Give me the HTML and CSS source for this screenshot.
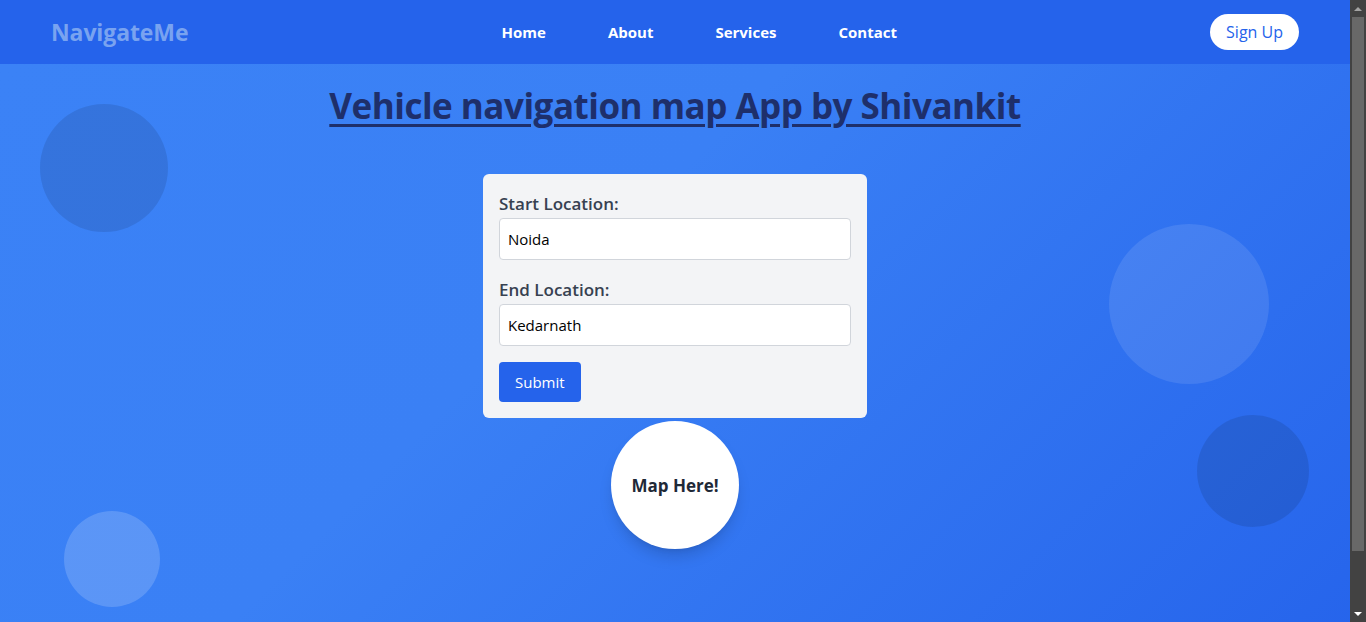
FILE: index.html
```html
<!DOCTYPE html>
<html lang="en">
<head>
<meta charset="utf-8">
<title>NavigateMe</title>
<link rel="stylesheet" href="styles.css">
</head>
<body>
<nav class="navbar">
  <div class="nav-inner">
    <a class="logo" href="#">NavigateMe</a>
    <ul class="nav-links">
      <li><a href="#">Home</a></li>
      <li><a href="#">About</a></li>
      <li><a href="#">Services</a></li>
      <li><a href="#">Contact</a></li>
    </ul>
    <a class="signup" href="#">Sign Up</a>
  </div>
</nav>
<main class="hero">
  <span class="blob blob-1"></span>
  <span class="blob blob-2"></span>
  <span class="blob blob-3"></span>
  <span class="blob blob-4"></span>
  <h1 class="title">Vehicle navigation map App by Shivankit</h1>
  <form class="card">
    <label class="label" for="start">Start Location:</label>
    <input class="input" id="start" type="text" value="Noida">
    <label class="label" for="end">End Location:</label>
    <input class="input" id="end" type="text" value="Kedarnath">
    <button class="submit" type="button">Submit</button>
  </form>
  <div class="map-circle">Map Here!</div>
</main>
<div class="scrollbar" aria-hidden="true">
  <span class="sb-btn"><span class="arrow-up"></span></span>
  <span class="sb-track"><span class="sb-thumb"></span></span>
  <span class="sb-btn"><span class="arrow-down"></span></span>
</div>
</body>
</html>
```

FILE: styles.css
```css
html::-webkit-scrollbar {
  display: none;
}
* {
  box-sizing: border-box;
}
body {
  margin: 0;
  padding-right: 16px;
  font-family: "Open Sans", "Noto Sans", sans-serif;
  color: #111827;
  background: #3b82f6;
}
a {
  text-decoration: none;
}
.navbar {
  background: #2563eb;
  height: 64px;
}
.nav-inner {
  max-width: 1280px;
  margin: 0 auto;
  padding: 0 16px;
  height: 64px;
  display: flex;
  align-items: center;
  justify-content: space-between;
}
.logo {
  font-size: 23px;
  font-weight: 700;
  color: #79a3f0;
  letter-spacing: -0.1px;
}
.nav-links {
  list-style: none;
  margin: 0;
  padding: 0;
  display: flex;
  gap: 62px;
}
.nav-links a {
  color: #ffffff;
  font-weight: 700;
  font-size: 15px;
}
.signup {
  background: #ffffff;
  color: #2563eb;
  font-size: 16px;
  font-weight: 500;
  line-height: 24px;
  padding: 6px 16px;
  border-radius: 9999px;
}
.hero {
  position: relative;
  min-height: 100vh;
  background: linear-gradient(135deg, #3b82f6 0%, #3a80f5 40%, #2563eb 100%);
  display: flex;
  flex-direction: column;
  align-items: center;
  padding-top: 22px;
  overflow: hidden;
}
.blob {
  position: absolute;
  border-radius: 50%;
}
.blob-1 {
  left: 40px;
  top: 40px;
  width: 128px;
  height: 128px;
  background: rgba(0, 0, 0, 0.1);
}
.blob-2 {
  left: 1109px;
  top: 160px;
  width: 160px;
  height: 160px;
  background: rgba(255, 255, 255, 0.1);
}
.blob-3 {
  left: 1197px;
  top: 351px;
  width: 112px;
  height: 112px;
  background: rgba(0, 0, 0, 0.1);
}
.blob-4 {
  left: 64px;
  top: 447px;
  width: 96px;
  height: 96px;
  background: rgba(255, 255, 255, 0.17);
}
.title {
  position: relative;
  margin: 0 0 48px;
  font-size: 35px;
  line-height: 40px;
  font-weight: 700;
  letter-spacing: -0.5px;
  color: #1e2f6b;
  text-decoration: underline;
  text-underline-offset: 5px;
  text-decoration-thickness: 3px;
}
.card {
  position: relative;
  width: 384px;
  background: #f3f4f6;
  border-radius: 6px;
  padding: 16px;
  display: flex;
  flex-direction: column;
  align-items: flex-start;
}
.label {
  font-size: 17px;
  line-height: 28px;
  font-weight: 600;
  color: #374151;
}
.input {
  width: 100%;
  height: 42px;
  border: 1px solid #d1d5db;
  border-radius: 4px;
  background: #ffffff;
  color: #000000;
  font-family: inherit;
  font-size: 15px;
  padding: 0 8px;
  margin-bottom: 16px;
}
.submit {
  background: #2563eb;
  color: #ffffff;
  border: none;
  border-radius: 4px;
  height: 40px;
  padding: 0 16px;
  font-family: inherit;
  font-size: 15px;
}
.map-circle {
  position: relative;
  margin-top: 3px;
  width: 128px;
  height: 128px;
  border-radius: 50%;
  background: #ffffff;
  box-shadow: 0 10px 15px -3px rgba(0, 0, 0, 0.15), 0 4px 6px -4px rgba(0, 0, 0, 0.1);
  display: flex;
  align-items: center;
  justify-content: center;
  font-size: 17px;
  font-weight: 700;
  color: #1f2937;
}
.scrollbar {
  position: fixed;
  top: 0;
  right: 0;
  width: 16px;
  height: 100vh;
  background: #424242;
  display: flex;
  flex-direction: column;
  z-index: 10;
}
.sb-btn {
  height: 17px;
  flex: none;
  display: flex;
  align-items: center;
  justify-content: center;
}
.arrow-up {
  width: 0;
  height: 0;
  border-left: 4px solid transparent;
  border-right: 4px solid transparent;
  border-bottom: 4px solid #a3a3a3;
}
.arrow-down {
  width: 0;
  height: 0;
  border-left: 4px solid transparent;
  border-right: 4px solid transparent;
  border-top: 4px solid #ffffff;
}
.sb-track {
  flex: 1;
  padding: 0 2px;
}
.sb-thumb {
  display: block;
  height: 534px;
  background: #686868;
}
```
